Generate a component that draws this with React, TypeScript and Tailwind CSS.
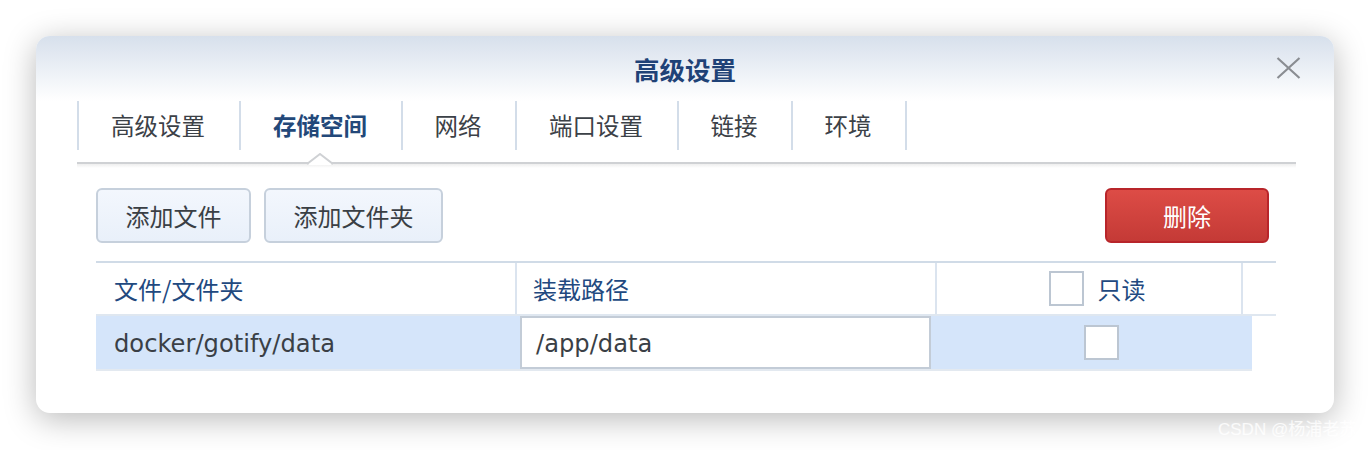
import React from "react";

const FONT = { fontFamily: '"Noto Sans CJK SC", "Noto Sans", sans-serif' };
const LATIN = { fontFamily: '"DejaVu Sans", "Noto Sans CJK SC", sans-serif' };

function Checkbox() {
  return <div className="w-[35px] h-[35px] bg-white border-2 border-[#bcc6d2] shrink-0" />;
}

export default function App() {
  const tabs = [
    { label: "高级设置", w: "w-[162px]" },
    { label: "存储空间", w: "w-[162px]", active: true },
    { label: "网络", w: "w-[114px]" },
    { label: "端口设置", w: "w-[162px]" },
    { label: "链接", w: "w-[114px]" },
    { label: "环境", w: "w-[114px]" },
  ];
  return (
    <div className="relative w-[1370px] h-[450px] bg-white overflow-hidden" style={FONT}>
      <div className="absolute left-[36px] top-[36px] w-[1298px] h-[377px] rounded-[14px] bg-white shadow-[0_6px_32px_rgba(0,0,0,0.28)] overflow-hidden">
        <div className="bg-gradient-to-b from-[#d7e0ec] to-white h-[65px] relative flex items-center justify-center">
          <div className="text-[25.5px] font-bold text-[#1f4277] leading-none">高级设置</div>
          <svg className="absolute left-[1240px] top-[21px]" width="25" height="22" viewBox="0 0 25 22">
            <path d="M1.5 1 L23.5 21 M23.5 1 L1.5 21" stroke="#8a8d92" strokeWidth="2.2" fill="none" />
          </svg>
        </div>
        <div className="ml-[41px] mr-[38px] relative">
          <div className="flex h-[49px] border-l-2 border-[#d3dde9]">
            {tabs.map((t) => (
              <div
                key={t.label}
                className={`${t.w} border-r-2 border-[#d3dde9] flex items-center justify-center text-[23.5px] pr-[2px] ${
                  t.active ? "font-bold text-[#234879]" : "text-[#3c4147]"
                }`}
              >
                {t.label}
              </div>
            ))}
          </div>
          <div className="h-[12px]" />
          <div className="h-[2px] bg-[#cfd1d4]" />
          <div className="h-[4px] bg-gradient-to-b from-[#eeeeee] to-white" />
          <svg className="absolute left-[230px] top-[52px]" width="26" height="12" viewBox="0 0 26 12">
            <path d="M0 11 L13 1 L26 11" fill="white" stroke="#cfd1d4" strokeWidth="2" />
            <rect x="2" y="11" width="22" height="1" fill="white" />
          </svg>
        </div>
        <div className="ml-[60px] mr-[58px] mt-[20px]">
          <div className="flex items-center">
            <button className="w-[155px] h-[55px] rounded-[6px] border-2 border-[#c6d0dc] bg-gradient-to-b from-[#f3f7fd] to-[#e9f0fa] text-[24px] text-[#3a3f45]">
              添加文件
            </button>
            <button className="ml-[13px] w-[179px] h-[55px] rounded-[6px] border-2 border-[#c6d0dc] bg-gradient-to-b from-[#f3f7fd] to-[#e9f0fa] text-[24px] text-[#3a3f45]">
              添加文件夹
            </button>
            <div className="flex-1" />
            <button className="mr-[7px] w-[164px] h-[55px] rounded-[6px] border-2 border-[#b8252a] bg-gradient-to-b from-[#dd4c46] to-[#c43a36] text-[24px] text-white">
              删除
            </button>
          </div>
          <div className="mt-[18px] border-t-2 border-[#d0dbe7]">
            <div className="flex h-[53px] border-b-2 border-[#dfe7f0] text-[24px] text-[#22497f]">
              <div className="w-[421px] flex items-center pl-[18px] border-r-2 border-[#dbe4ef]">文件/文件夹</div>
              <div className="w-[420px] flex items-center pl-[16px] border-r-2 border-[#dbe4ef]">装载路径</div>
              <div className="w-[306px] flex items-center justify-center gap-[14px] pl-[16px] border-r-2 border-[#dbe4ef]">
                <Checkbox />
                <span>只读</span>
              </div>
              <div className="flex-1" />
            </div>
            <div className="flex w-[1156px] h-[55px] bg-[#d5e5fa] border-b-2 border-[#e3e9f0]">
              <div className="w-[424px] flex items-center pl-[18px] pt-[3px] text-[24.2px] text-[#3a3f46]" style={LATIN}>
                docker/gotify/data
              </div>
              <div className="w-[411px] h-[53px] bg-white border-2 border-[#c3ccd7] flex items-center pl-[14px] pt-[3px] text-[24.2px] text-[#3a3f46]" style={LATIN}>
                /app/data
              </div>
              <div className="flex-1 flex items-center justify-center pl-[20px]">
                <Checkbox />
              </div>
            </div>
          </div>
        </div>
      </div>
      <div
        className="absolute left-[1218px] top-[421px] text-[17px] text-white/80 leading-none"
        style={{ fontFamily: '"Liberation Sans", "Noto Sans CJK SC", sans-serif' }}
      >
        CSDN @杨浦老苏
      </div>
    </div>
  );
}
